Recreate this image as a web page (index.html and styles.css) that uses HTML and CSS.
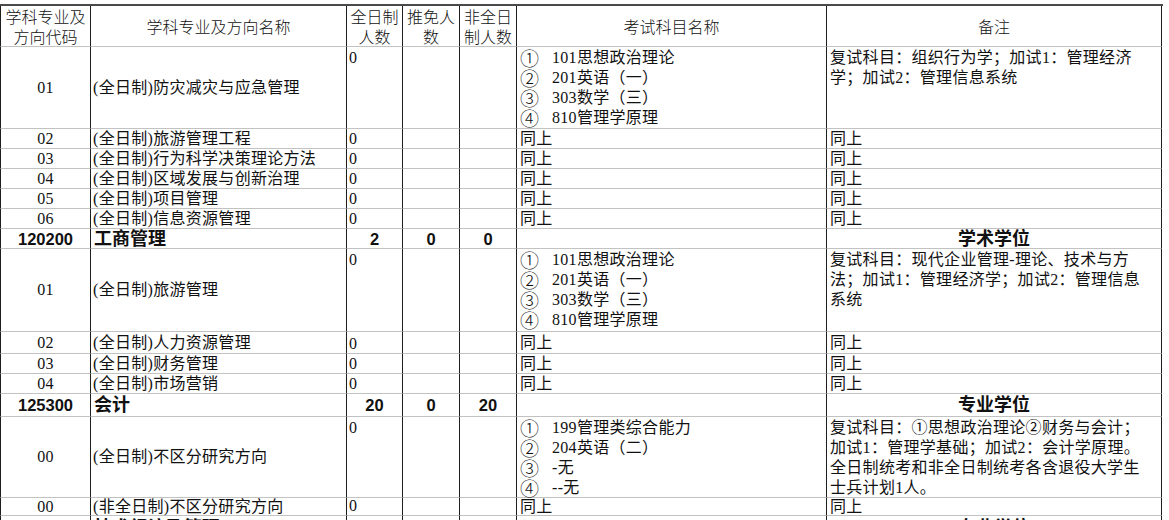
FILE: index.html
```html
<!DOCTYPE html>
<html lang="zh-CN">
<head>
<meta charset="utf-8">
<title>招生专业目录</title>
<link rel="stylesheet" href="styles.css">
</head>
<body>
<div class="sheet">
  <!-- header -->
  <div class="c hd first">学科专业及<br>方向代码</div>
  <div class="c hd">学科专业及方向名称</div>
  <div class="c hd">全日制<br>人数</div>
  <div class="c hd">推免人<br>数</div>
  <div class="c hd">非全日<br>制人数</div>
  <div class="c hd">考试科目名称</div>
  <div class="c hd">备注</div>

  <!-- 01 -->
  <div class="c code first">01</div>
  <div class="c name">(全日制)防灾减灾与应急管理</div>
  <div class="c qty top">0</div>
  <div class="c"></div>
  <div class="c"></div>
  <div class="c list top">
    <div class="li"><span class="n">①</span><span>101思想政治理论</span></div>
    <div class="li"><span class="n">②</span><span>201英语（一）</span></div>
    <div class="li"><span class="n">③</span><span>303数学（三）</span></div>
    <div class="li"><span class="n">④</span><span>810管理学原理</span></div>
  </div>
  <div class="c note top">复试科目：组织行为学；加试1：管理经济<br>学；加试2：管理信息系统</div>

  <div class="c code first">02</div>
  <div class="c name">(全日制)旅游管理工程</div>
  <div class="c qty low">0</div>
  <div class="c"></div>
  <div class="c"></div>
  <div class="c list">同上</div>
  <div class="c note">同上</div>

  <div class="c code first">03</div>
  <div class="c name">(全日制)行为科学决策理论方法</div>
  <div class="c qty low">0</div>
  <div class="c"></div>
  <div class="c"></div>
  <div class="c list">同上</div>
  <div class="c note">同上</div>

  <div class="c code first">04</div>
  <div class="c name">(全日制)区域发展与创新治理</div>
  <div class="c qty low">0</div>
  <div class="c"></div>
  <div class="c"></div>
  <div class="c list">同上</div>
  <div class="c note">同上</div>

  <div class="c code first">05</div>
  <div class="c name">(全日制)项目管理</div>
  <div class="c qty low">0</div>
  <div class="c"></div>
  <div class="c"></div>
  <div class="c list">同上</div>
  <div class="c note">同上</div>

  <div class="c code first">06</div>
  <div class="c name">(全日制)信息资源管理</div>
  <div class="c qty low">0</div>
  <div class="c"></div>
  <div class="c"></div>
  <div class="c list">同上</div>
  <div class="c note">同上</div>

  <!-- 120200 -->
  <div class="c b bc num first">120200</div>
  <div class="c b bl">工商管理</div>
  <div class="c b bc num">2</div>
  <div class="c b bc num">0</div>
  <div class="c b bc num">0</div>
  <div class="c b"></div>
  <div class="c b bc">学术学位</div>

  <div class="c code first">01</div>
  <div class="c name">(全日制)旅游管理</div>
  <div class="c qty top">0</div>
  <div class="c"></div>
  <div class="c"></div>
  <div class="c list top">
    <div class="li"><span class="n">①</span><span>101思想政治理论</span></div>
    <div class="li"><span class="n">②</span><span>201英语（一）</span></div>
    <div class="li"><span class="n">③</span><span>303数学（三）</span></div>
    <div class="li"><span class="n">④</span><span>810管理学原理</span></div>
  </div>
  <div class="c note top">复试科目：现代企业管理-理论、技术与方<br>法；加试1：管理经济学；加试2：管理信息<br>系统</div>

  <div class="c code first">02</div>
  <div class="c name">(全日制)人力资源管理</div>
  <div class="c qty low">0</div>
  <div class="c"></div>
  <div class="c"></div>
  <div class="c list">同上</div>
  <div class="c note">同上</div>

  <div class="c code first">03</div>
  <div class="c name">(全日制)财务管理</div>
  <div class="c qty low">0</div>
  <div class="c"></div>
  <div class="c"></div>
  <div class="c list">同上</div>
  <div class="c note">同上</div>

  <div class="c code first">04</div>
  <div class="c name">(全日制)市场营销</div>
  <div class="c qty low">0</div>
  <div class="c"></div>
  <div class="c"></div>
  <div class="c list">同上</div>
  <div class="c note">同上</div>

  <!-- 125300 -->
  <div class="c b bc num first">125300</div>
  <div class="c b bl">会计</div>
  <div class="c b bc num">20</div>
  <div class="c b bc num">0</div>
  <div class="c b bc num">20</div>
  <div class="c b"></div>
  <div class="c b bc">专业学位</div>

  <div class="c code first">00</div>
  <div class="c name">(全日制)不区分研究方向</div>
  <div class="c qty top">0</div>
  <div class="c"></div>
  <div class="c"></div>
  <div class="c list top">
    <div class="li"><span class="n">①</span><span>199管理类综合能力</span></div>
    <div class="li"><span class="n">②</span><span>204英语（二）</span></div>
    <div class="li"><span class="n">③</span><span>-无</span></div>
    <div class="li"><span class="n">④</span><span>--无</span></div>
  </div>
  <div class="c note top">复试科目：①思想政治理论②财务与会计；<br>加试1：管理学基础；加试2：会计学原理。<br>全日制统考和非全日制统考各含退役大学生<br>士兵计划1人。</div>

  <div class="c code first">00</div>
  <div class="c name">(非全日制)不区分研究方向</div>
  <div class="c qty low">0</div>
  <div class="c"></div>
  <div class="c"></div>
  <div class="c list">同上</div>
  <div class="c note">同上</div>

  <!-- partial next row -->
  <div class="c b bc num first">120700</div>
  <div class="c b bl">技术经济及管理</div>
  <div class="c b bc num">3</div>
  <div class="c b bc num">0</div>
  <div class="c b bc num">0</div>
  <div class="c b"></div>
  <div class="c b bc">专业学位</div>
</div>
</body>
</html>
```

FILE: styles.css
```css
html, body {
  margin: 0;
  padding: 0;
  background: #ffffff;
}

body {
  padding-top: 4px;
  height: 520px;
  overflow: hidden;
  box-sizing: border-box;
}

.sheet {
  display: grid;
  grid-template-columns: 91px 256px 56px 57px 57px 310px 335px;
  grid-template-rows: 41px 82px 20px 20px 20px 20px 20px 20px 83px 22px 20px 20px 23px 81px 18px 24px;
  width: 1163px;
  border-top: 2px solid #4a4a4a;
  font-family: "Liberation Serif", "Noto Sans CJK SC", serif;
  font-size: 16px;
  line-height: 20px;
  letter-spacing: 0.3px;
  color: #111111;
}

.c {
  box-sizing: border-box;
  border-right: 1px solid #1e1e1e;
  border-bottom: 1px solid #c2c2c2;
  padding: 0 2px;
  white-space: nowrap;
  display: flex;
  align-items: center;
}

.first {
  border-left: 1px solid #1e1e1e;
}

.hd {
  justify-content: center;
  text-align: center;
  line-height: 20px;
  padding: 0;
  letter-spacing: 0;
  font-family: "Noto Sans CJK SC", sans-serif;
  font-weight: 300;
}

.code {
  justify-content: center;
}

.name {
  padding-left: 2px;
}

.qty {
  padding-left: 2px;
}

.qty.low {
  align-items: flex-end;
  line-height: 19px;
}

.top {
  align-items: flex-start;
  padding-top: 1px;
}

.list {
  padding-left: 3px;
  flex-direction: column;
  align-items: flex-start;
  justify-content: center;
}

.list.top {
  justify-content: flex-start;
}

.li {
  display: flex;
  align-items: center;
  height: 20px;
}

.n {
  display: block;
  width: 32px;
  font-family: "Noto Sans CJK SC", sans-serif;
  font-weight: 300;
  font-size: 19px;
  line-height: 20px;
  letter-spacing: 0;
}

.note {
  padding-left: 3px;
}

.note.top {
  align-items: flex-start;
}

.b {
  font-family: "Liberation Sans", "Noto Sans CJK SC", sans-serif;
  font-weight: 700;
  font-size: 18px;
  letter-spacing: 0;
}

.bc {
  justify-content: center;
}

.bl {
  padding-left: 3px;
}

.num {
  font-size: 16.5px;
}
```
